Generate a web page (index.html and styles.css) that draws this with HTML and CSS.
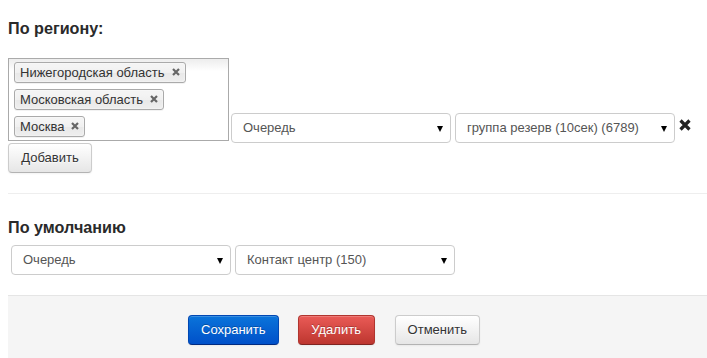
FILE: index.html
```html
<!DOCTYPE html>
<html>
<head>
<meta charset="utf-8">
<link rel="stylesheet" href="styles.css">
</head>
<body>
<div class="page">
  <h3 class="title title-first">По региону:</h3>
  <div class="rule-row">
    <div class="chosen">
      <span class="tag">Нижегородская область<span class="tag-x"><svg width="8" height="8" viewBox="0 0 8 8"><path d="M1 1L7 7M7 1L1 7" stroke="#666" stroke-width="2.2"/></svg></span></span>
      <span class="tag">Московская область<span class="tag-x"><svg width="8" height="8" viewBox="0 0 8 8"><path d="M1 1L7 7M7 1L1 7" stroke="#666" stroke-width="2.2"/></svg></span></span>
      <span class="tag">Москва<span class="tag-x"><svg width="8" height="8" viewBox="0 0 8 8"><path d="M1 1L7 7M7 1L1 7" stroke="#666" stroke-width="2.2"/></svg></span></span>
    </div>
    <div class="sel">Очередь<span class="caret"></span></div>
    <div class="sel">группа резерв (10сек) (6789)<span class="caret"></span></div>
    <span class="del"><svg width="12" height="12" viewBox="0 0 12 12"><path d="M1.5 1.5L10.5 10.5M10.5 1.5L1.5 10.5" stroke="#222" stroke-width="3.2"/></svg></span>
  </div>
  <button class="btn btn-add">Добавить</button>
  <div class="divider"></div>
  <h3 class="title title-second">По умолчанию</h3>
  <div class="default-row">
    <div class="sel">Очередь<span class="caret"></span></div>
    <div class="sel">Контакт центр (150)<span class="caret"></span></div>
  </div>
  <div class="actions">
    <button class="btn btn-primary">Сохранить</button>
    <button class="btn btn-danger">Удалить</button>
    <button class="btn btn-cancel">Отменить</button>
  </div>
</div>
</body>
</html>
```

FILE: styles.css
```css
* { box-sizing: border-box; }
html, body { margin: 0; padding: 0; background: #fff; }
body {
  font-family: "Liberation Sans", Arial, sans-serif;
  font-size: 13px;
  color: #333;
  overflow: hidden;
}
.page { padding: 0 0 0 8px; }
.title {
  margin: 0;
  font-size: 16.2px;
  line-height: 20px;
  font-weight: bold;
  color: #2a2a2a;
}
.title-first { padding-top: 18px; margin-bottom: 20px; }
.title-second { margin-top: 23px; margin-bottom: 8px; }
.rule-row {
  display: flex;
  align-items: flex-end;
}
.chosen {
  width: 221px;
  border: 1px solid #aaa;
  background: #fff linear-gradient(#eee 1%, #fff 15%);
  padding: 3px 5px;
  display: flex;
  flex-wrap: wrap;
  flex-direction: column;
  align-items: flex-start;
  gap: 6px;
  margin-bottom: 2px;
}
.tag {
  position: relative;
  height: 21px;
  line-height: 19px;
  padding: 0 20px 0 5px;
  border: 1px solid #aaa;
  border-radius: 3px;
  background: linear-gradient(#f4f4f4 20%, #f0f0f0 50%, #e8e8e8 52%, #eee 100%);
  box-shadow: 0 0 2px #fff inset, 0 1px 0 rgba(0,0,0,0.05);
  color: #333;
  font-size: 13px;
}
.tag-x {
  position: absolute;
  right: 5px;
  top: 5px;
  width: 8px;
  height: 8px;
  display: block;
}
.tag-x svg { display: block; }
.sel {
  position: relative;
  width: 220px;
  height: 30px;
  border: 1px solid #ccc;
  border-radius: 4px;
  background: #fff;
  color: #555;
  font-size: 13px;
  line-height: 28px;
  padding-left: 11px;
}
.rule-row .sel { margin-left: 2px; }
.rule-row .sel + .sel { margin-left: 4px; }
.caret {
  position: absolute;
  right: 7px;
  top: 12px;
  width: 0;
  height: 0;
  border-left: 3.5px solid transparent;
  border-right: 3.5px solid transparent;
  border-top: 6px solid #000;
}
.del {
  align-self: flex-end;
  margin-left: 4px;
  margin-bottom: 12px;
  width: 12px;
  height: 12px;
}
.del svg { display: block; }
.btn {
  display: inline-block;
  height: 30px;
  padding: 0 12px;
  font-family: "Liberation Sans", Arial, sans-serif;
  font-size: 13px;
  line-height: 28px;
  color: #333;
  text-shadow: 0 1px 1px rgba(255,255,255,0.75);
  background: linear-gradient(#fff, #e6e6e6);
  border: 1px solid #ccc;
  border-bottom-color: #b3b3b3;
  border-radius: 4px;
  box-shadow: inset 0 1px 0 rgba(255,255,255,0.2), 0 1px 2px rgba(0,0,0,0.05);
  cursor: pointer;
}
.btn-add { margin-top: 0; width: 84px; }
.btn-primary {
  color: #fff;
  text-shadow: 0 -1px 0 rgba(0,0,0,0.25);
  background: linear-gradient(#0a74da, #0050c9);
  border-color: #0047b3 #0047b3 #002a80;
}
.btn-danger {
  width: 77px;
  margin-left: 19px;
  color: #fff;
  text-shadow: 0 -1px 0 rgba(0,0,0,0.25);
  background: linear-gradient(#ea5b57, #bd362f);
  border-color: #b0352f #b0352f #802420;
}
.btn-cancel { width: 85px; margin-left: 20px; }
.divider {
  height: 1px;
  background: #eee;
  margin-top: 20px;
}
.default-row {
  display: flex;
  gap: 4px;
  padding-left: 3px;
}
.actions {
  margin-top: 20px;
  height: 70px;
  background: #f5f5f5;
  border-top: 1px solid #e5e5e5;
  padding: 19px 0 0 180px;
  display: flex;
  align-items: flex-start;
}
```
